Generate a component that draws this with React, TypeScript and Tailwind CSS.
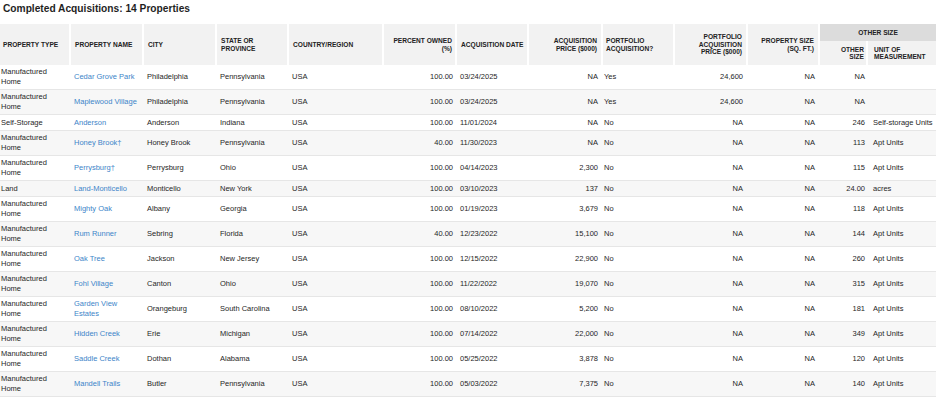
const ROWS = [
  ["Manufactured Home", "Cedar Grove Park", "Philadelphia", "Pennsylvania", "USA", "100.00", "03/24/2025", "NA", "Yes", "24,600", "NA", "NA", ""],
  ["Manufactured Home", "Maplewood Village", "Philadelphia", "Pennsylvania", "USA", "100.00", "03/24/2025", "NA", "Yes", "24,600", "NA", "NA", ""],
  ["Self-Storage", "Anderson", "Anderson", "Indiana", "USA", "100.00", "11/01/2024", "NA", "No", "NA", "NA", "246", "Self-storage Units"],
  ["Manufactured Home", "Honey Brook†", "Honey Brook", "Pennsylvania", "USA", "40.00", "11/30/2023", "NA", "No", "NA", "NA", "113", "Apt Units"],
  ["Manufactured Home", "Perrysburg†", "Perrysburg", "Ohio", "USA", "100.00", "04/14/2023", "2,300", "No", "NA", "NA", "115", "Apt Units"],
  ["Land", "Land-Monticello", "Monticello", "New York", "USA", "100.00", "03/10/2023", "137", "No", "NA", "NA", "24.00", "acres"],
  ["Manufactured Home", "Mighty Oak", "Albany", "Georgia", "USA", "100.00", "01/19/2023", "3,679", "No", "NA", "NA", "118", "Apt Units"],
  ["Manufactured Home", "Rum Runner", "Sebring", "Florida", "USA", "40.00", "12/23/2022", "15,100", "No", "NA", "NA", "144", "Apt Units"],
  ["Manufactured Home", "Oak Tree", "Jackson", "New Jersey", "USA", "100.00", "12/15/2022", "22,900", "No", "NA", "NA", "260", "Apt Units"],
  ["Manufactured Home", "Fohl Village", "Canton", "Ohio", "USA", "100.00", "11/22/2022", "19,070", "No", "NA", "NA", "315", "Apt Units"],
  ["Manufactured Home", "Garden View Estates", "Orangeburg", "South Carolina", "USA", "100.00", "08/10/2022", "5,200", "No", "NA", "NA", "181", "Apt Units"],
  ["Manufactured Home", "Hidden Creek", "Erie", "Michigan", "USA", "100.00", "07/14/2022", "22,000", "No", "NA", "NA", "349", "Apt Units"],
  ["Manufactured Home", "Saddle Creek", "Dothan", "Alabama", "USA", "100.00", "05/25/2022", "3,878", "No", "NA", "NA", "120", "Apt Units"],
  ["Manufactured Home", "Mandell Trails", "Butler", "Pennsylvania", "USA", "100.00", "05/03/2022", "7,375", "No", "NA", "NA", "140", "Apt Units"],
];

const WIDTHS = [70, 73, 73, 72, 95, 73, 72, 74, 72, 73, 72, 48, 69];
const RIGHT = [5, 7, 9, 10, 11];

const HEADERS = [
  { label: "PROPERTY TYPE", cls: "text-left pl-[3px] pr-[4px]" },
  { label: "PROPERTY NAME", cls: "text-left px-[4px]" },
  { label: "CITY", cls: "text-left px-[4px]" },
  { label: "STATE OR PROVINCE", cls: "text-left px-[4px]" },
  { label: "COUNTRY/REGION", cls: "text-left px-[4px]" },
  { label: "PERCENT OWNED (%)", cls: "text-right px-[3px]" },
  { label: "ACQUISITION DATE", cls: "text-left px-[4px] whitespace-nowrap" },
  { label: "ACQUISITION PRICE ($000)", cls: "text-right px-[4px]" },
  { label: "PORTFOLIO ACQUISITION?", cls: "text-left px-[3px]" },
  { label: "PORTFOLIO ACQUISITION PRICE ($000)", cls: "text-right px-[4px]" },
  { label: "PROPERTY SIZE (SQ. FT.)", cls: "text-right px-[4px]" },
];

export default function App() {
  return (
    <div className="w-[936px] h-[399px] bg-white overflow-hidden text-[#262626]" style={{ fontFamily: '"Liberation Sans", Arial, sans-serif' }}>
      <h1 className="text-[10.2px] font-bold leading-[12px] pl-[3px] pt-[3px] h-[24px] text-[#1f1f1f]">
        Completed Acquisitions: 14 Properties
      </h1>

      <table className="table-fixed border-collapse w-[936px]">
        <colgroup>
          {WIDTHS.map((w, i) => (
            <col key={i} style={{ width: w }} />
          ))}
        </colgroup>
        <thead className="text-[6.6px] font-bold leading-[7.5px] text-[#222]">
          <tr className="h-[17px]">
            {HEADERS.map((h) => (
              <th key={h.label} rowSpan={2} className={`bg-[#f2f2f2] border-r-2 border-white align-middle ${h.cls}`}>
                {h.label}
              </th>
            ))}
            <th colSpan={2} className="bg-[#dcdcdc] text-center align-middle">
              OTHER SIZE
            </th>
          </tr>
          <tr className="h-[24px]">
            <th className="bg-[#f2f2f2] border-r-2 border-white text-right pr-[2px] pl-[3px] align-middle">
              OTHER
              <br />
              SIZE
            </th>
            <th className="bg-[#f2f2f2] text-left pl-[6px] pr-[2px] align-middle">UNIT OF MEASUREMENT</th>
          </tr>
        </thead>
        <tbody className="text-[7.5px] leading-[10px]">
          {ROWS.map((row, r) => (
            <tr key={r} className={`h-[16px] border-b border-[#e6e6e6] ${r % 2 === 1 ? "bg-[#f7f7f7]" : "bg-white"}`}>
              {row.map((cell, c) => {
                let pad = "px-[4px]";
                if (c === 0) pad = "pl-[1px] pr-[4px]";
                if (c === 5) pad = "px-[3px]";
                if (c === 8) pad = "px-[2px]";
                if (c === 11) pad = "pl-[2px] pr-[2px]";
                if (c === 12) pad = "pl-[6px] pr-[1px]";
                return (
                  <td
                    key={c}
                    className={`py-[2px] align-middle whitespace-normal ${pad} ${RIGHT.includes(c) ? "text-right" : "text-left"} ${c === 1 ? "text-[#3d85c9]" : ""}`}
                  >
                    {cell}
                  </td>
                );
              })}
            </tr>
          ))}
        </tbody>
      </table>
    </div>
  );
}
